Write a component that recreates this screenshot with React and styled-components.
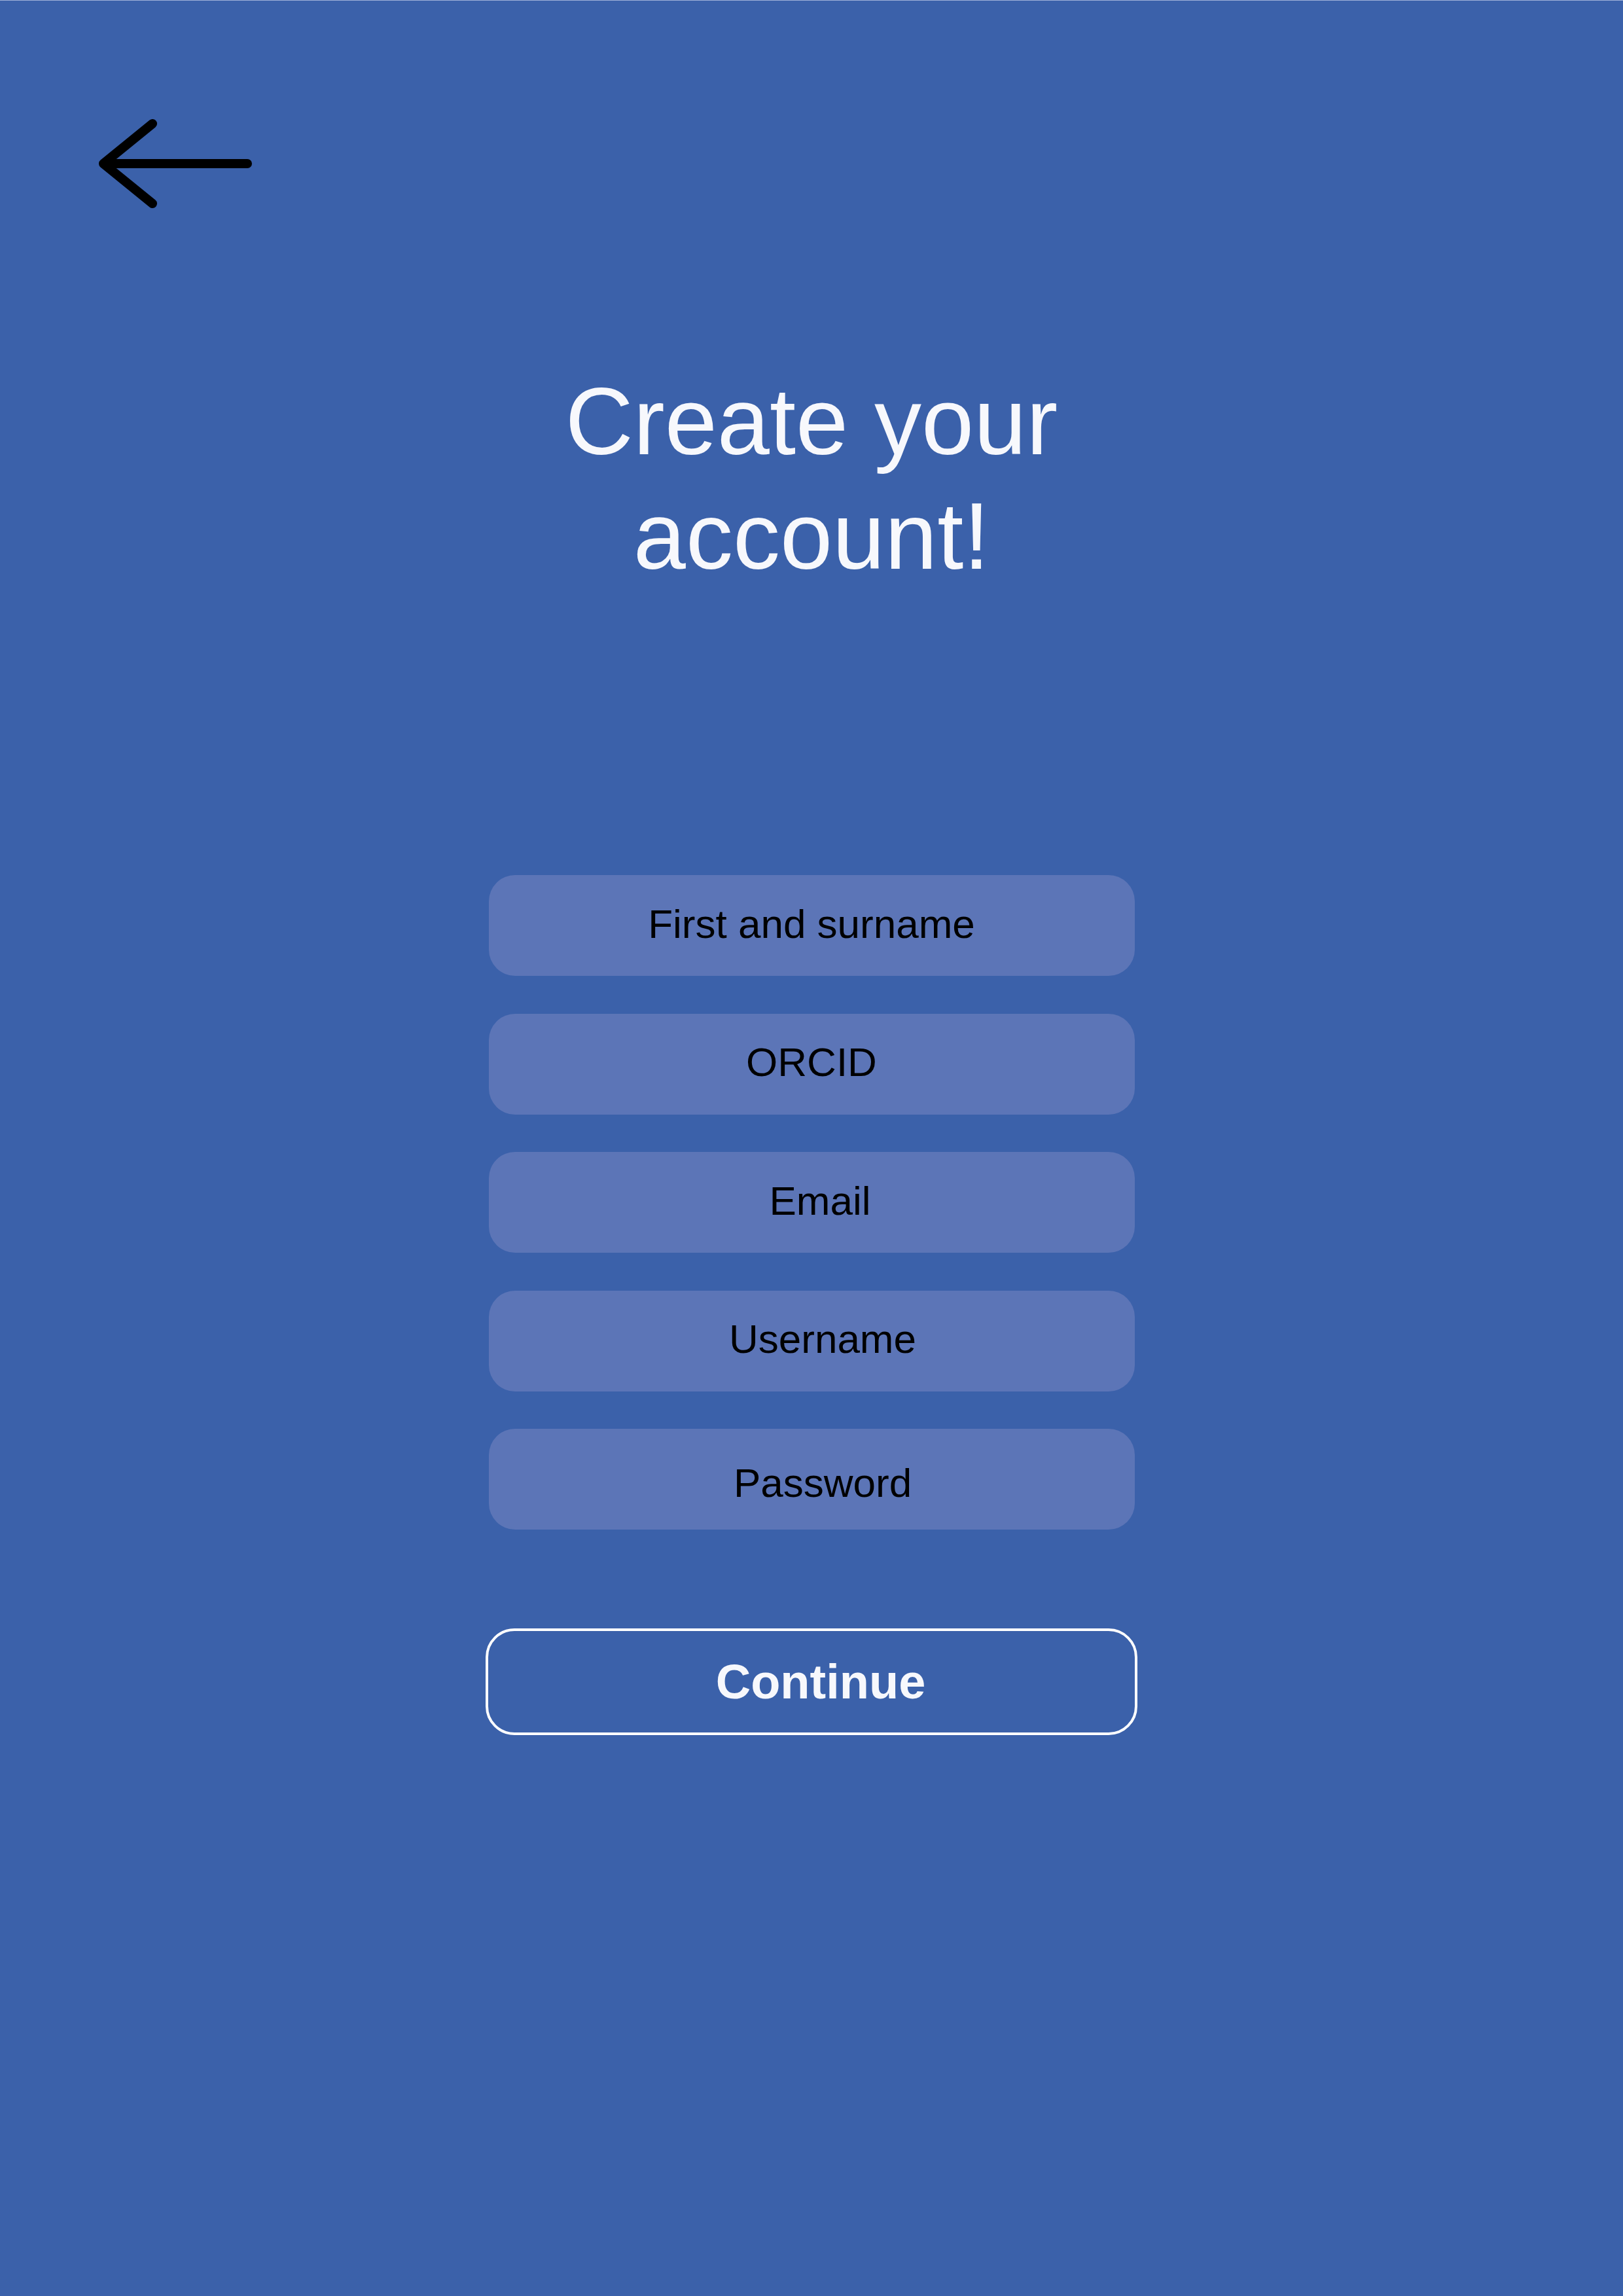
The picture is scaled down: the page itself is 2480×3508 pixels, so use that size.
import React from 'react';
import styled, { createGlobalStyle } from 'styled-components';

const GlobalStyle = createGlobalStyle`
  html, body {
    margin: 0;
    padding: 0;
    background: #3b61aa;
  }

  * {
    box-sizing: border-box;
  }
`;

const StyledPage = styled.div`
  align-items: center;
  background-color: #3b61aa;
  border-top: 1px solid #9fb0d8;
  display: flex;
  flex-direction: column;
  font-family: 'Liberation Sans', Arial, Helvetica, sans-serif;
  min-height: 3508px;
  width: 100%;
`;

const StyledTopBar = styled.div`
  align-self: stretch;
  display: flex;
  padding: 181px 0 0 151px;
`;

const StyledBackButton = styled.button`
  background: none;
  border: 0;
  cursor: pointer;
  display: block;
  height: 136px;
  padding: 0;
  width: 234px;

  svg {
    display: block;
  }
`;

const StyledTitle = styled.h1`
  color: #f7f8fc;
  font-size: 144px;
  font-weight: 400;
  line-height: 175px;
  margin: 239px 0 0;
  text-align: center;
`;

const StyledForm = styled.form`
  display: flex;
  flex-direction: column;
  gap: 57.5px;
  margin-top: 430px;
  width: 987px;
`;

const StyledInput = styled.input`
  background-color: #5c75b7;
  border: 0;
  border-radius: 40px;
  color: #000;
  font-family: inherit;
  font-size: 62px;
  height: 154px;
  outline: none;
  padding-bottom: 6px;
  padding-left: ${p => p.shift * 2}px;
  padding-right: 0;
  padding-top: ${p => p.drop}px;
  text-align: center;
  width: 100%;

  &::placeholder {
    color: #000;
    opacity: 1;
  }
`;

const StyledContinue = styled.button`
  align-items: center;
  background: transparent;
  border: 4px solid #ffffff;
  border-radius: 44px;
  color: #f7f8fc;
  cursor: pointer;
  display: flex;
  font-family: inherit;
  font-size: 74px;
  font-weight: 700;
  height: 163px;
  justify-content: center;
  margin-top: 151px;
  padding: 0 0 0 28px;
  width: 996px;
`;

const fields = [
  { name: 'name', label: 'First and surname', shift: 0, drop: 0 },
  { name: 'orcid', label: 'ORCID', shift: 0, drop: 0 },
  { name: 'email', label: 'Email', shift: 13, drop: 0 },
  { name: 'username', label: 'Username', shift: 17, drop: 0 },
  { name: 'password', label: 'Password', shift: 17, drop: 16, type: 'password' },
];

function BackArrow() {
  return (
    <svg width="234" height="136" viewBox="0 0 234 136" fill="none">
      <path
        d="M227 68H7M82 7L7 68L82 129"
        stroke="#000"
        strokeWidth="14"
        strokeLinecap="round"
        strokeLinejoin="round"
      />
    </svg>
  );
}

export default function App() {
  return (
    <>
      <GlobalStyle />
      <StyledPage>
        <StyledTopBar>
          <StyledBackButton type="button" aria-label="Back">
            <BackArrow />
          </StyledBackButton>
        </StyledTopBar>

        <StyledTitle>
          Create your
          <br />
          account!
        </StyledTitle>

        <StyledForm onSubmit={e => e.preventDefault()}>
          {fields.map(f => (
            <StyledInput
              key={f.name}
              name={f.name}
              type={f.type || 'text'}
              placeholder={f.label}
              shift={f.shift}
              drop={f.drop}
            />
          ))}
        </StyledForm>

        <StyledContinue type="button">Continue</StyledContinue>
      </StyledPage>
    </>
  );
}
